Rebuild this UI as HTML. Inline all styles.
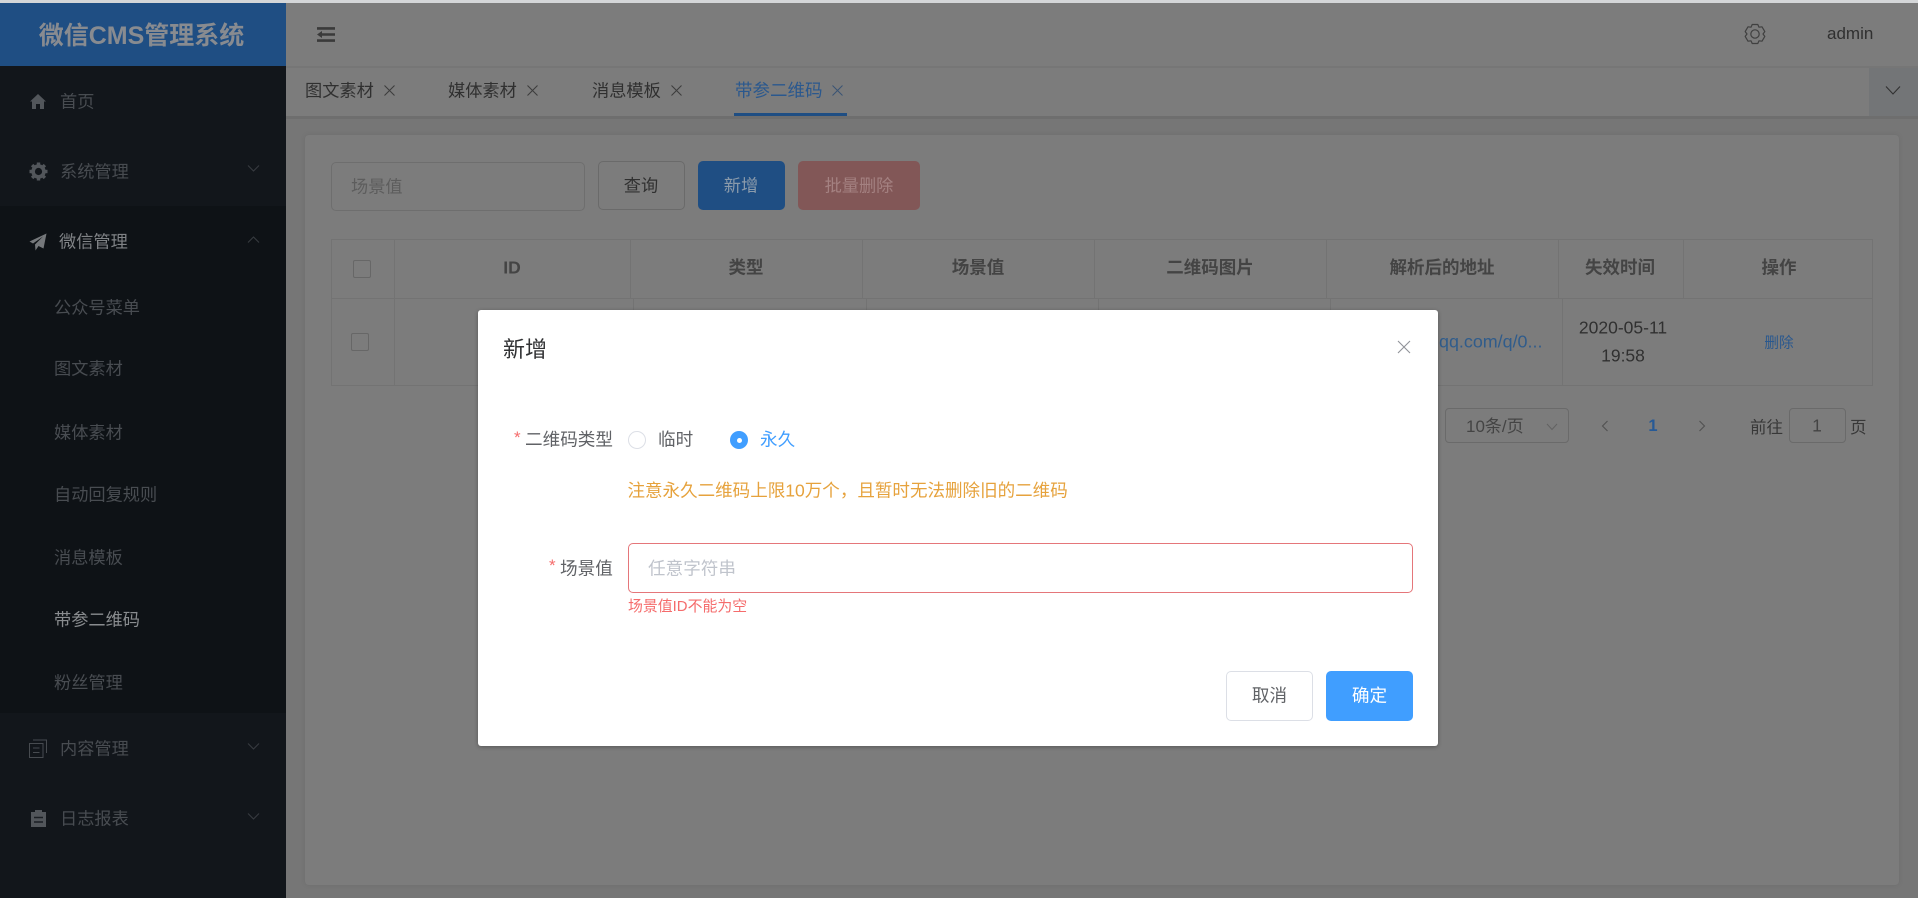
<!DOCTYPE html>
<html lang="zh-CN">
<head>
<meta charset="utf-8">
<title>微信CMS管理系统</title>
<style>
html,body{margin:0;padding:0;width:1918px;height:898px;overflow:hidden;background:#767676;}
body{position:relative;font-family:"Liberation Sans","Noto Sans CJK SC",sans-serif;font-size:17px;color:#333;}
div,span,svg{position:absolute;box-sizing:border-box;}
.t{white-space:nowrap;transform:translateY(-50%);line-height:1.2;filter:blur(.3px);}
.c{white-space:nowrap;transform:translate(-50%,-50%);line-height:1.2;filter:blur(.3px);}
.m{color:#484c51;font-size:17.2px;}
.h{font-weight:bold;color:#444;font-size:17.5px;}
.v{background:#737373;width:1px;}
</style>
</head>
<body>
<div style="left:0;top:0;width:1918px;height:3px;background:#d4d6d8"></div>

<!-- sidebar -->
<div style="left:0;top:3px;width:286px;height:895px;background:#12161b"></div>
<div style="left:0;top:206px;width:286px;height:507px;background:#0e1216"></div>
<div style="left:0;top:3px;width:286px;height:63px;background:#1f4e83"></div>
<div class="c" style="left:141.5px;top:36px;font-size:25px;font-weight:bold;color:#888b90">微信CMS管理系统</div>

<svg style="left:29px;top:93px" width="18" height="17" viewBox="0 0 18 17"><path d="M9 1 L17 8.5 L15 8.5 L15 16 L11 16 L11 11 L7 11 L7 16 L3 16 L3 8.5 L1 8.5 Z" fill="#52565b"/></svg>
<div class="t m" style="left:60px;top:102px">首页</div>

<svg style="left:29px;top:162px" width="19" height="19" viewBox="0 0 19 19"><circle cx="9.5" cy="9.5" r="5.4" fill="none" stroke="#52565b" stroke-width="3.6"/><g stroke="#52565b" stroke-width="3.4"><path d="M9.5 0.5V4"/><path d="M9.5 15V18.5"/><path d="M0.5 9.5H4"/><path d="M15 9.5H18.5"/><path d="M3.1 3.1L5.6 5.6"/><path d="M13.4 13.4L15.9 15.9"/><path d="M3.1 15.9L5.6 13.4"/><path d="M13.4 5.6L15.9 3.1"/></g></svg>
<div class="t m" style="left:60px;top:172px">系统管理</div>
<svg style="left:247px;top:164px" width="13" height="9" viewBox="0 0 13 9"><path d="M1 1.5L6.5 7L12 1.5" fill="none" stroke="#383c41" stroke-width="1"/></svg>

<svg style="left:29px;top:233px" width="18" height="18" viewBox="0 0 18 18"><path d="M17.5 .5L14.5 15.5L9.5 13L6.5 17.5L6 11.5L14 3.5L4 10.5L.5 8.5Z" fill="#75787b"/></svg>
<div class="t m" style="left:59px;top:242px;color:#808386">微信管理</div>
<svg style="left:247px;top:235px" width="13" height="9" viewBox="0 0 13 9"><path d="M1 7.5L6.5 2L12 7.5" fill="none" stroke="#383c41" stroke-width="1"/></svg>

<div class="t m" style="left:54px;top:308px">公众号菜单</div>
<div class="t m" style="left:54px;top:369px">图文素材</div>
<div class="t m" style="left:54px;top:433px">媒体素材</div>
<div class="t m" style="left:54px;top:495px">自动回复规则</div>
<div class="t m" style="left:54px;top:558px">消息模板</div>
<div class="t m" style="left:54px;top:620px;color:#898c8f">带参二维码</div>
<div class="t m" style="left:54px;top:683px">粉丝管理</div>

<svg style="left:29px;top:739px" width="18" height="19" viewBox="0 0 18 19"><path d="M.5 4.5H14V18.5H.5Z" fill="none" stroke="#474b50"/><path d="M4 1H17.5V14" fill="none" stroke="#474b50"/><path d="M4 9H10.5M4 13.5H10.5" stroke="#474b50"/></svg>
<div class="t m" style="left:60px;top:749px">内容管理</div>
<svg style="left:247px;top:742px" width="13" height="9" viewBox="0 0 13 9"><path d="M1 1.5L6.5 7L12 1.5" fill="none" stroke="#383c41" stroke-width="1"/></svg>

<svg style="left:31px;top:810px" width="15" height="17" viewBox="0 0 15 17"><path d="M0 2H4V0H11V2H15V17H0Z" fill="#52565b"/><path d="M3 7.5H12M3 12H12" stroke="#1b1f24" stroke-width="1.4"/></svg>
<div class="t m" style="left:60px;top:819px">日志报表</div>
<svg style="left:247px;top:812px" width="13" height="9" viewBox="0 0 13 9"><path d="M1 1.5L6.5 7L12 1.5" fill="none" stroke="#383c41" stroke-width="1"/></svg>

<!-- header -->
<div style="left:286px;top:3px;width:1632px;height:64px;background:#7c7c7c"></div>
<div style="left:286px;top:66px;width:1632px;height:2px;background:#767676"></div>
<svg style="left:317px;top:27px" width="18" height="15" viewBox="0 0 18 15"><path d="M0 1.4H18M4 7.5H18M0 13.6H18" stroke="#3a3a3a" stroke-width="2.6"/><path d="M5 4L0 7.5L5 11Z" fill="#3a3a3a"/></svg>
<svg style="left:1744px;top:23px" width="22" height="22" viewBox="0 0 22 22"><path d="M8.2 1.5L13.8 1.5L15 4.2L18 3.8L20.8 8.6L19 11L20.8 13.4L18 18.2L15 17.8L13.8 20.5L8.2 20.5L7 17.8L4 18.2L1.2 13.4L3 11L1.2 8.6L4 3.8L7 4.2Z" fill="none" stroke="#404040" stroke-width="1.2" stroke-linejoin="round"/><circle cx="11" cy="11" r="4.2" fill="none" stroke="#404040" stroke-width="1.2"/></svg>
<div class="t" style="left:1827px;top:34px;color:#303030;font-size:17px">admin</div>

<!-- tabs -->
<div style="left:286px;top:68px;width:1632px;height:48px;background:#7c7c7c"></div>
<div style="left:286px;top:116px;width:1632px;height:3px;background:#6e6e6e"></div>
<div style="left:1869px;top:68px;width:49px;height:48px;background:#737577"></div>
<svg style="left:1885px;top:85px" width="16" height="11" viewBox="0 0 16 11"><path d="M1 1.5L8 9L15 1.5" fill="none" stroke="#303030" stroke-width="1.1"/></svg>

<div class="t" style="left:305px;top:91px;color:#303030;font-size:17.2px">图文素材</div>
<svg style="left:384px;top:85px" width="11" height="11" viewBox="0 0 11 11"><path d="M.5.5L10.5 10.5M10.5.5L.5 10.5" stroke="#3c3c3c" stroke-width="1"/></svg>
<div class="t" style="left:448px;top:91px;color:#303030;font-size:17.2px">媒体素材</div>
<svg style="left:527px;top:85px" width="11" height="11" viewBox="0 0 11 11"><path d="M.5.5L10.5 10.5M10.5.5L.5 10.5" stroke="#3c3c3c" stroke-width="1"/></svg>
<div class="t" style="left:592px;top:91px;color:#303030;font-size:17.2px">消息模板</div>
<svg style="left:671px;top:85px" width="11" height="11" viewBox="0 0 11 11"><path d="M.5.5L10.5 10.5M10.5.5L.5 10.5" stroke="#3c3c3c" stroke-width="1"/></svg>
<div class="t" style="left:735px;top:91px;color:#2a588e;font-size:17.5px">带参二维码</div>
<svg style="left:832px;top:85px" width="11" height="11" viewBox="0 0 11 11"><path d="M.5.5L10.5 10.5M10.5.5L.5 10.5" stroke="#3a5474" stroke-width="1"/></svg>
<div style="left:734px;top:113px;width:113px;height:3px;background:#1f4e83"></div>

<!-- card -->
<div style="left:305px;top:135px;width:1594px;height:750px;background:#7c7c7c;border-radius:4px;box-shadow:0 0 6px rgba(0,0,0,.08)"></div>

<!-- toolbar -->
<div style="left:331px;top:162px;width:254px;height:49px;border:1px solid #6e6e6e;border-radius:5px"></div>
<div class="t" style="left:351px;top:187px;color:#5d5d5d;font-size:17.2px">场景值</div>
<div style="left:598px;top:161px;width:87px;height:49px;border:1px solid #6a6a6a;border-radius:5px"></div>
<div class="c" style="left:641px;top:186px;color:#303030;font-size:17.2px">查询</div>
<div style="left:698px;top:161px;width:87px;height:49px;background:#1f4e83;border-radius:5px"></div>
<div class="c" style="left:741px;top:186px;color:#8b9bab;font-size:17.2px">新增</div>
<div style="left:798px;top:161px;width:122px;height:49px;background:#825757;border-radius:5px"></div>
<div class="c" style="left:859px;top:186px;color:#a48181;font-size:17.2px">批量删除</div>

<!-- table -->
<div style="left:331px;top:239px;width:1542px;height:147px;border:1px solid #737373"></div>
<div style="left:331px;top:298px;width:1542px;height:1px;background:#737373"></div>
<div class="v" style="left:394px;top:239px;height:147px"></div>
<div class="v" style="left:630px;top:239px;height:59px"></div>
<div class="v" style="left:862px;top:239px;height:59px"></div>
<div class="v" style="left:1094px;top:239px;height:59px"></div>
<div class="v" style="left:1326px;top:239px;height:59px"></div>
<div class="v" style="left:1558px;top:239px;height:59px"></div>
<div class="v" style="left:1683px;top:239px;height:59px"></div>
<div class="v" style="left:633px;top:298px;height:88px"></div>
<div class="v" style="left:866px;top:298px;height:88px"></div>
<div class="v" style="left:1098px;top:298px;height:88px"></div>
<div class="v" style="left:1330px;top:298px;height:88px"></div>
<div class="v" style="left:1562px;top:298px;height:88px"></div>
<div style="left:353px;top:260px;width:18px;height:18px;border:1px solid #676767;border-radius:2px"></div>
<div style="left:351px;top:333px;width:18px;height:18px;border:1px solid #676767;border-radius:2px"></div>
<div class="c h" style="left:512px;top:268px">ID</div>
<div class="c h" style="left:746px;top:268px">类型</div>
<div class="c h" style="left:978px;top:268px">场景值</div>
<div class="c h" style="left:1210px;top:268px">二维码图片</div>
<div class="c h" style="left:1442px;top:268px">解析后的地址</div>
<div class="c h" style="left:1620px;top:268px">失效时间</div>
<div class="c h" style="left:1779px;top:268px">操作</div>
<div class="t" style="left:1439px;top:342px;color:#305c8b;font-size:17.9px">qq.com/q/0...</div>
<div class="c" style="left:1623px;top:328px;color:#303030;font-size:17.5px">2020-05-11</div>
<div class="c" style="left:1623px;top:356px;color:#303030;font-size:17.5px">19:58</div>
<div class="c" style="left:1779px;top:344px;color:#2a588e;font-size:14.6px">删除</div>

<!-- pagination -->
<div style="left:1445px;top:408px;width:124px;height:35px;border:1px solid #6a6a6a;border-radius:4px"></div>
<div class="t" style="left:1466px;top:427px;color:#444;font-size:17px">10条/页</div>
<svg style="left:1546px;top:423px" width="12" height="8" viewBox="0 0 12 8"><path d="M1 1L6 6.5L11 1" fill="none" stroke="#626262" stroke-width="1"/></svg>
<svg style="left:1601px;top:420px" width="8" height="12" viewBox="0 0 8 12"><path d="M6.5 1L1.5 6L6.5 11" fill="none" stroke="#515151" stroke-width="1.1"/></svg>
<div class="c" style="left:1653px;top:427px;color:#275a96;font-size:16.5px;font-weight:bold">1</div>
<svg style="left:1698px;top:420px" width="8" height="12" viewBox="0 0 8 12"><path d="M1.5 1L6.5 6L1.5 11" fill="none" stroke="#515151" stroke-width="1.1"/></svg>
<div class="t" style="left:1750px;top:429px;color:#383838;font-size:16.5px">前往</div>
<div style="left:1789px;top:408px;width:57px;height:35px;border:1px solid #6a6a6a;border-radius:4px"></div>
<div class="c" style="left:1817px;top:426px;color:#444;font-size:17.5px">1</div>
<div class="t" style="left:1850px;top:429px;color:#383838;font-size:16.5px">页</div>

<!-- modal -->
<div style="left:478px;top:310px;width:960px;height:436px;background:#fff;border-radius:3px;box-shadow:0 1px 4px rgba(0,0,0,.3)"></div>
<div class="t" style="left:503px;top:350px;color:#303133;font-size:22px">新增</div>
<svg style="left:1397px;top:340px" width="14" height="14" viewBox="0 0 14 14"><path d="M1 1L13 13M13 1L1 13" stroke="#909399" stroke-width="1.1"/></svg>

<div class="t" style="left:514px;top:438px;color:#f56c6c;font-size:17px">*</div>
<div class="t" style="left:525px;top:440px;color:#606266;font-size:17.6px">二维码类型</div>
<div style="left:628px;top:431px;width:18px;height:18px;border:1px solid #dcdfe6;border-radius:50%"></div>
<div class="t" style="left:658px;top:440px;color:#606266;font-size:17.6px">临时</div>
<div style="left:730px;top:431px;width:18px;height:18px;background:#409eff;border-radius:50%"></div>
<div style="left:736.5px;top:437.5px;width:5px;height:5px;background:#fff;border-radius:50%"></div>
<div class="t" style="left:760px;top:440px;color:#409eff;font-size:17.6px">永久</div>
<div class="t" style="left:627.5px;top:491px;color:#e6a23c;font-size:17.55px">注意永久二维码上限10万个，且暂时无法删除旧的二维码</div>

<div class="t" style="left:549px;top:566px;color:#f56c6c;font-size:17px">*</div>
<div class="t" style="left:560px;top:569px;color:#606266;font-size:17.6px">场景值</div>
<div style="left:628px;top:543px;width:785px;height:50px;border:1px solid #e5767a;border-radius:5px;background:#fff"></div>
<div class="t" style="left:648px;top:569px;color:#c0c4cc;font-size:17.6px">任意字符串</div>
<div class="t" style="left:628px;top:608px;color:#f56c6c;font-size:14.9px">场景值ID不能为空</div>

<div style="left:1226px;top:671px;width:87px;height:50px;border:1px solid #dcdfe6;border-radius:5px;background:#fff"></div>
<div class="c" style="left:1269.5px;top:696px;color:#606266;font-size:17.6px">取消</div>
<div style="left:1326px;top:671px;width:87px;height:50px;background:#409eff;border-radius:5px"></div>
<div class="c" style="left:1369.5px;top:696px;color:#fff;font-size:17.6px">确定</div>
</body>
</html>
